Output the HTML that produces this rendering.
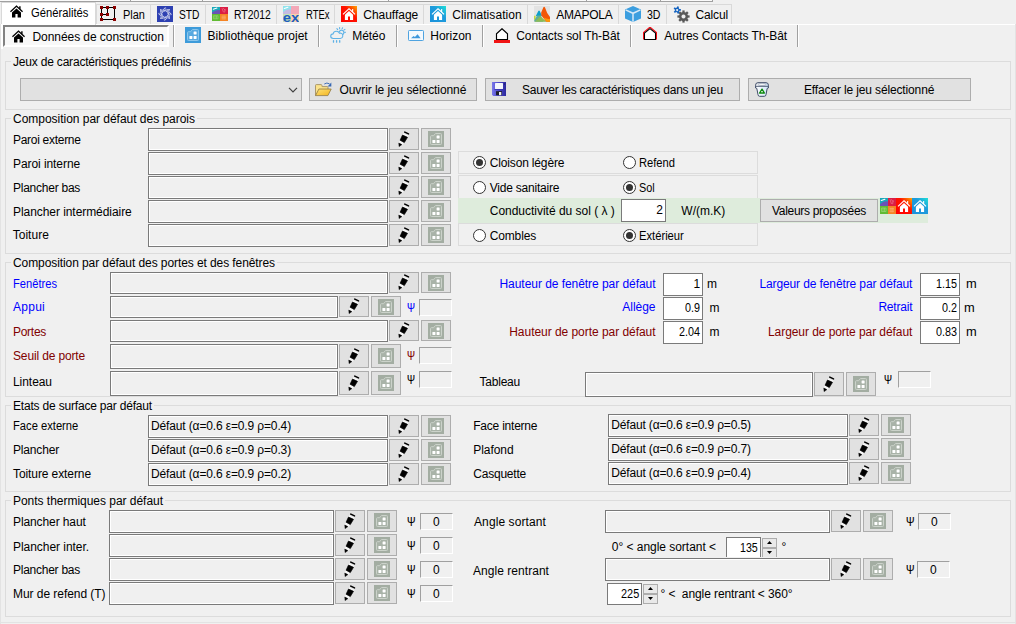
<!DOCTYPE html>
<html>
<head>
<meta charset="utf-8">
<title>Données de construction</title>
<style>
html,body{margin:0;padding:0;}
body{width:1016px;height:624px;overflow:hidden;background:#f0f0f0;font-family:"Liberation Sans",sans-serif;font-size:12px;color:#000;}
#root{position:relative;width:1016px;height:624px;overflow:hidden;background:#f0f0f0;}
#root div,#root span.t,#root svg{position:absolute;box-sizing:border-box;}
span.t{white-space:pre;line-height:16px;height:16px;}
.grp{border:1px solid #dcdcdc;}
.lbl{background:#f0f0f0;}
.inp{border:1px solid #7a7a7a;background:#f0f0f0;box-shadow:inset 0 0 0 1px #fff;}
.winp{border:1px solid #7a7a7a;background:#fff;}
.btn{border:1px solid #adadad;background:#e1e1e1;}
.psi{border:1px solid;border-color:#a0a0a0 #fff #fff #a0a0a0;background:#f0f0f0;}
.pan{border:1px solid #dcdcdc;}
.tab{border:1px solid #d9d9d9;border-bottom:none;background:#f0f0f0;}
.sep{width:2px;border-left:1px solid #a0a0a0;border-right:1px solid #fff;}
.rad{width:13px;height:13px;border-radius:50%;border:1px solid #333;background:#fff;}
.rad.on::after{content:"";position:absolute;left:2px;top:2px;width:7px;height:7px;border-radius:50%;background:#333;}
</style>
</head>
<body>
<svg width="0" height="0" style="position:absolute">
<defs>
<linearGradient id="gr" x1="0" y1="1" x2="1" y2="0"><stop offset="0" stop-color="#ff0000"/><stop offset="0.6" stop-color="#ff1400"/><stop offset="1" stop-color="#ffa800"/></linearGradient>
<linearGradient id="gb" x1="0" y1="1" x2="1" y2="0"><stop offset="0" stop-color="#1b92db"/><stop offset="0.6" stop-color="#1e9cdc"/><stop offset="1" stop-color="#1fe0d6"/></linearGradient>
<linearGradient id="gf" x1="0" y1="0" x2="1" y2="0"><stop offset="0" stop-color="#7a78ea"/><stop offset="0.5" stop-color="#4a46c8"/><stop offset="1" stop-color="#2d2a9c"/></linearGradient>
<linearGradient id="gy" x1="0" y1="0" x2="1" y2="1"><stop offset="0" stop-color="#fde27a"/><stop offset="1" stop-color="#f3b31c"/></linearGradient>
<linearGradient id="gt" x1="0" y1="0" x2="1" y2="0"><stop offset="0" stop-color="#ffffff"/><stop offset="1" stop-color="#cfe6f8"/></linearGradient>
<symbol id="pen" viewBox="0 0 12 17">
<path d="M5.5 2.3L10.5 4.7L9.6 6.4L4.6 4zM2 9L6.4 11.6L3.9 13.9L0.7 12.2z" fill="#fff" fill-opacity="0.8"/>
<path d="M6.8 1.1L10.5 2.9" stroke="#000" stroke-width="1.6" stroke-linecap="round"/>
<path d="M4.5 4.1L9.5 6.3L6.3 11.6L2.1 9.2z" fill="#000" stroke="#000" stroke-width="0.7" stroke-linejoin="round"/>
<path d="M0.8 12L3.9 13.6L1.1 15.6z" fill="#000" stroke="#000" stroke-width="0.5" stroke-linejoin="round"/>
</symbol>
<symbol id="lib" viewBox="0 0 16 16">
<rect width="16" height="16" fill="#a3ada2"/>
<path d="M2.5 12.7V5.6q0-0.9 0.9-0.9h2.3l1-1.6q0.4-0.6 1.1-0.6h4.8q0.9 0 0.9 0.9v9.3q0 0.8-0.9 0.8h-9.2q-0.9 0-0.9-0.8z" fill="#a9b3a8" stroke="#cbd2ca" stroke-width="1"/>
<rect x="8.6" y="4.5" width="3" height="3" rx="0.4" fill="#fff"/>
<rect x="4.4" y="8.9" width="3" height="3" rx="0.4" fill="#fff"/>
<rect x="8.6" y="8.9" width="3" height="3" rx="0.4" fill="#fff"/>
</symbol>
<symbol id="libb" viewBox="0 0 16 16">
<rect width="16" height="16" fill="#3d9bda"/>
<path d="M2.5 12.7V5.6q0-0.9 0.9-0.9h2.3l1-1.6q0.4-0.6 1.1-0.6h4.8q0.9 0 0.9 0.9v9.3q0 0.8-0.9 0.8h-9.2q-0.9 0-0.9-0.8z" fill="#57a9e0" stroke="#8cc6ec" stroke-width="1"/>
<rect x="8.6" y="4.5" width="3" height="3" rx="0.4" fill="#fff"/>
<rect x="4.4" y="8.9" width="3" height="3" rx="0.4" fill="#fff"/>
<rect x="8.6" y="8.9" width="3" height="3" rx="0.4" fill="#fff"/>
</symbol>
<symbol id="home" viewBox="0 0 13 13">
<path d="M6.5 0.2L0 6.2l0.9 1 5.6-5.1 5.6 5.1 0.9-1-2.4-2.2V1.2H9.2v1.5z"/>
<path d="M6.5 3.4L2 7.5v5.1h3.4V9h2.2v3.6H11V7.5z"/>
</symbol>
<symbol id="hs" viewBox="0 0 16 16">
<path d="M8 1.9L1.6 7.9l0.8 0.9L8 3.6l5.6 5.2 0.8-0.9-2.2-2.1V3h-1.1v1.7z" fill="#fff"/>
<path d="M8 5L3.9 8.8V14h3.1v-3.4h2V14h3.1V8.8z" fill="#fff"/>
</symbol>
<symbol id="plan" viewBox="0 0 16 15">
<path d="M1.5 1.5h13v12h-13zM7.5 1.5v7h-6" fill="none" stroke="#000" stroke-width="1"/>
<g fill="#8b0000"><rect x="0" y="0" width="3" height="3"/><rect x="6" y="0" width="3" height="3"/><rect x="13" y="0" width="3" height="3"/><rect x="0" y="7" width="3" height="3"/><rect x="6" y="7" width="3" height="3"/><rect x="0" y="12" width="3" height="3"/><rect x="13" y="12" width="3" height="3"/></g>
</symbol>
<symbol id="std" viewBox="0 0 16 16">
<rect width="16" height="16" fill="#2d40b2"/><g transform="rotate(0 8 8)"><path d="M7.6 5.2Q9.4 3.1 13 3.6M8.8 5.6Q10.4 4.3 12.7 4.9" fill="none" stroke="#fff" stroke-width="0.75" stroke-opacity="0.95"/></g><g transform="rotate(45 8 8)"><path d="M7.6 5.2Q9.4 3.1 13 3.6M8.8 5.6Q10.4 4.3 12.7 4.9" fill="none" stroke="#fff" stroke-width="0.75" stroke-opacity="0.95"/></g><g transform="rotate(90 8 8)"><path d="M7.6 5.2Q9.4 3.1 13 3.6M8.8 5.6Q10.4 4.3 12.7 4.9" fill="none" stroke="#fff" stroke-width="0.75" stroke-opacity="0.95"/></g><g transform="rotate(135 8 8)"><path d="M7.6 5.2Q9.4 3.1 13 3.6M8.8 5.6Q10.4 4.3 12.7 4.9" fill="none" stroke="#fff" stroke-width="0.75" stroke-opacity="0.95"/></g><g transform="rotate(180 8 8)"><path d="M7.6 5.2Q9.4 3.1 13 3.6M8.8 5.6Q10.4 4.3 12.7 4.9" fill="none" stroke="#fff" stroke-width="0.75" stroke-opacity="0.95"/></g><g transform="rotate(225 8 8)"><path d="M7.6 5.2Q9.4 3.1 13 3.6M8.8 5.6Q10.4 4.3 12.7 4.9" fill="none" stroke="#fff" stroke-width="0.75" stroke-opacity="0.95"/></g><g transform="rotate(270 8 8)"><path d="M7.6 5.2Q9.4 3.1 13 3.6M8.8 5.6Q10.4 4.3 12.7 4.9" fill="none" stroke="#fff" stroke-width="0.75" stroke-opacity="0.95"/></g><g transform="rotate(315 8 8)"><path d="M7.6 5.2Q9.4 3.1 13 3.6M8.8 5.6Q10.4 4.3 12.7 4.9" fill="none" stroke="#fff" stroke-width="0.75" stroke-opacity="0.95"/></g>
</symbol>
<symbol id="rt" viewBox="0 0 16 16" preserveAspectRatio="none">
<rect width="8" height="8" fill="#19a8b9"/>
<path d="M0 8V6.2Q4 2.4 8 3.6V8z" fill="#6b52b6"/>
<path d="M1.3 2.5L4.9 1.2" stroke="#fff" stroke-width="1.1" stroke-linecap="round"/>
<rect x="8" width="8" height="8" fill="#db1d44"/>
<rect y="8" width="8" height="8" fill="#61bb33"/>
<rect x="8" y="8" width="8" height="8" fill="#f58424"/>
<path d="M10 1.5l1.5 4.5M11 1.2l2.2 2.5M13.2 2.2l-0.6 4" stroke="#f08aa0" stroke-width="0.6" fill="none"/>
<path d="M1.5 10h4.5v3.5h-4.5zM3 10v3.5M4.5 10v3.5" stroke="#9fdc80" stroke-width="0.6" fill="none"/>
<path d="M9.5 10.5h4.5M9.5 12h4.5M9.5 13.5h4.5M11 9.5v5M12.8 9.5v5" stroke="#fab070" stroke-width="0.6" fill="none"/>
</symbol>
<symbol id="rtx" viewBox="0 0 16 16">
<rect width="8" height="8" fill="#8fe3ec"/>
<path d="M0 8V6.2Q4 2.4 8 3.6V8z" fill="#c3bbe2"/>
<path d="M1.3 2.5L4.9 1.2" stroke="#fff" stroke-width="1.1" stroke-linecap="round"/>
<rect x="8" width="8" height="8" fill="#f3a7b7"/>
<rect y="8" width="8" height="8" fill="#c4e2b4"/>
<rect x="8" y="8" width="8" height="8" fill="#fbd2ac"/>
<text x="-0.3" y="15.6" font-family="Liberation Sans, sans-serif" font-weight="bold" font-size="13.5" fill="#1d5cc0" textLength="16.4" lengthAdjust="spacingAndGlyphs">ex</text>
</symbol>
<symbol id="ama" viewBox="0 0 16 16">
<rect width="16" height="16" fill="#e3e3e3"/>
<path d="M0 9.7h1.6v4H0z" fill="#c6d936"/>
<path d="M1.8 10L4.2 5.2Q5 3.6 5.9 5.2L8 10z" fill="#0b9fcb"/>
<path d="M0.2 14.5L3 9.6H7L9 15.8H0.5z" fill="#5fae9c"/>
<path d="M0.8 15.8L6.3 10.3L12.6 15.8z" fill="#8dbb55"/>
<path d="M7.2 9.3V6.5L9.3 1.4Q10.2 0.2 11 1.6Q12.6 7.2 16 11V15.8H12.4Q9.5 12.5 7.2 9.3z" fill="#f25605"/>
<path d="M9.6 11.6Q12.5 13.4 16 13V15.8H12.6z" fill="#fb9a06"/>
</symbol>
<symbol id="cube" viewBox="0 0 16 16">
<path d="M8 0L16 3.5V12.5L8 16L0 12.5V3.5z" fill="#3c9edf"/>
<path d="M0.6 3.9L8 7.3L15.4 3.9M8 7.3V15.8" fill="none" stroke="#d6e8f6" stroke-width="1.5"/>
</symbol>
<symbol id="gear" viewBox="0 0 17 17">
<g transform="translate(10.5 10.5)" fill="#5a5a5a"><rect x="-1.15" y="-6.1" width="2.3" height="3" transform="rotate(0)"/><rect x="-1.15" y="-6.1" width="2.3" height="3" transform="rotate(45)"/><rect x="-1.15" y="-6.1" width="2.3" height="3" transform="rotate(90)"/><rect x="-1.15" y="-6.1" width="2.3" height="3" transform="rotate(135)"/><rect x="-1.15" y="-6.1" width="2.3" height="3" transform="rotate(180)"/><rect x="-1.15" y="-6.1" width="2.3" height="3" transform="rotate(225)"/><rect x="-1.15" y="-6.1" width="2.3" height="3" transform="rotate(270)"/><rect x="-1.15" y="-6.1" width="2.3" height="3" transform="rotate(315)"/><path fill-rule="evenodd" d="M0-4.5A4.5 4.5 0 1 0 0.001-4.5zM0-2A2 2 0 1 1-0.001-2z"/></g>
<g transform="translate(4.2 4) rotate(15)" fill="#1765c1"><rect x="-0.9" y="-3.7" width="1.8" height="2" transform="rotate(0)"/><rect x="-0.9" y="-3.7" width="1.8" height="2" transform="rotate(72)"/><rect x="-0.9" y="-3.7" width="1.8" height="2" transform="rotate(144)"/><rect x="-0.9" y="-3.7" width="1.8" height="2" transform="rotate(216)"/><rect x="-0.9" y="-3.7" width="1.8" height="2" transform="rotate(288)"/><path fill-rule="evenodd" d="M0-2.4A2.4 2.4 0 1 0 0.001-2.4zM0-1A1 1 0 1 1-0.001-1z"/></g>
</symbol>
<symbol id="meteo" viewBox="0 0 16 16">
<g fill="none" stroke="#5fb2e6" stroke-width="1.1" stroke-linecap="round">
<path d="M3.2 11.5Q0.6 11.3 0.7 9Q0.9 6.9 3.1 6.9Q3.6 4.2 6.3 4.2Q8.6 4.2 9.5 6.3Q10.3 5.9 11.2 6.3Q13.1 7 12.8 9.2Q12.5 11.4 10.3 11.5z"/>
<path d="M9.3 4.6Q10.3 2.9 12 3.2Q13.9 3.7 13.9 5.6Q13.8 6.8 13 7.4"/>
<path d="M9.6 0.6v1.2M12.6 0.7l-0.5 1.1M14.9 2.4l-1 0.7M15.6 5.3h-1.2M6.9 1.6l0.8 1"/>
<path d="M3.5 13.6v1.6M6.6 13.6v1.6M9.7 13.6v1.6" stroke-width="1.3"/>
</g>
</symbol>
<symbol id="horiz" viewBox="0 0 16 11">
<rect x="0.5" y="0.5" width="15" height="10" rx="0.8" fill="#f4f9fd" stroke="#4ea3e0" stroke-width="1"/>
<path d="M3 8.2L5.6 6.1L6.9 7L9.6 4.2L12.6 8.2z" fill="#3e98dc"/>
</symbol>
<symbol id="csol" viewBox="0 0 16 16">
<path d="M2.5 11.5V5.7L8 0.7L13.5 5.7V11.5z" fill="#fff" stroke="#000" stroke-width="1.15"/>
<rect x="0" y="12" width="16" height="3" fill="#f01414"/>
</symbol>
<symbol id="caut" viewBox="0 0 14 13">
<path d="M0.5 12.6V5.5L6.5 0.5H7.5L13.5 5.5V12.6" fill="none" stroke="#fa0a14" stroke-width="1.1"/>
<path d="M1.5 12.5V6L7 1.7L12.5 6V12.5z" fill="#fff" stroke="#000" stroke-width="1.05"/>
</symbol>
<symbol id="fold" viewBox="0 0 17 15">
<path d="M0.5 13.5V3.4Q0.5 2.6 1.3 2.6H6.1Q6.8 2.6 6.9 3.4L7.1 4.6H12.2Q13 4.6 13 5.4V7" fill="#fbe38b" stroke="#a38f63" stroke-width="0.9"/>
<path d="M0.5 13.6L3.9 7H16.2L12.9 13.6z" fill="url(#gy)" stroke="#8f7a45" stroke-width="0.8"/>
<path d="M9.3 2Q11.8 0.2 14.5 1.8" fill="none" stroke="#3667b4" stroke-width="0.95"/>
<path d="M16.3 0.6V4.4H12.6z" fill="#3667b4"/>
</symbol>
<symbol id="flop" viewBox="0 0 14 14">
<path d="M0 0H14V14H1.2L0 12.8z" fill="url(#gf)"/>
<rect x="3" y="1" width="8" height="6" rx="0.5" fill="#f4f6fb"/>
<rect x="2.4" y="7.2" width="9.2" height="0.8" fill="#3532ae"/>
<rect x="4" y="9.2" width="6" height="4" fill="#1e1e28"/>
<rect x="7" y="10" width="2.3" height="3.2" fill="#eceef6"/>
<rect x="12.1" y="1.4" width="1" height="1.3" fill="#1f1d70"/>
</symbol>
<symbol id="trash" viewBox="0 0 14 15">
<path d="M0.6 3.2Q0.6 0.7 3 0.7H11Q13.4 0.7 13.4 3.2V6L12.2 6.4L11 12.6Q10.8 14.3 9.4 14.3H4.6Q3.2 14.3 3 12.6L1.8 6.4L0.6 6z" fill="url(#gt)" stroke="#3d4b66" stroke-width="1"/>
<ellipse cx="7" cy="2.4" rx="4.2" ry="1" fill="#fff" stroke="#7b879c" stroke-width="0.5"/>
<path d="M1 4.3H13" stroke="#3d4b66" stroke-width="0.9"/>
<path d="M7 7.2L9.4 11H4.6z" fill="#fff" stroke="#0c8a0c" stroke-width="1.4" stroke-linejoin="round"/>
</symbol>
</defs>
</svg>
<div id="root">
<div style="left:0;top:0;width:713px;height:1px;background:#fafafa"></div>
<div style="left:0;top:1px;width:713px;height:1px;background:#a0a0a0"></div>
<div style="left:130px;top:0;width:1px;height:2px;background:#a0a0a0"></div>
<div style="left:202px;top:0;width:1px;height:2px;background:#a0a0a0"></div>
<div style="left:388px;top:0;width:1px;height:2px;background:#a0a0a0"></div>
<div style="left:586px;top:0;width:1px;height:2px;background:#a0a0a0"></div>
<div style="left:660px;top:0;width:1px;height:2px;background:#a0a0a0"></div>
<div style="left:712px;top:0;width:1px;height:2px;background:#a0a0a0"></div>
<div class="tab" style="left:96px;top:4px;width:55px;height:21px"></div>
<span class="t" style="left:122.5px;top:7px;transform:scaleX(0.915);transform-origin:0 0;">Plan</span>
<div class="tab" style="left:150px;top:4px;width:56px;height:21px"></div>
<span class="t" style="left:179px;top:7px;transform:scaleX(0.854);transform-origin:0 0;">STD</span>
<div class="tab" style="left:205px;top:4px;width:72px;height:21px"></div>
<span class="t" style="left:234.25px;top:7px;transform:scaleX(0.865);transform-origin:0 0;">RT2012</span>
<div class="tab" style="left:276px;top:4px;width:59px;height:21px"></div>
<span class="t" style="left:305.6px;top:7px;transform:scaleX(0.789);transform-origin:0 0;">RTEx</span>
<div class="tab" style="left:334px;top:4px;width:90px;height:21px"></div>
<span class="t" style="left:363.25px;top:7px;letter-spacing:-0.019px;">Chauffage</span>
<div class="tab" style="left:423px;top:4px;width:105px;height:21px"></div>
<span class="t" style="left:452.25px;top:7px;letter-spacing:0.061px;">Climatisation</span>
<div class="tab" style="left:527px;top:4px;width:92px;height:21px"></div>
<span class="t" style="left:556.25px;top:7px;letter-spacing:-0.254px;">AMAPOLA</span>
<div class="tab" style="left:618px;top:4px;width:49px;height:21px"></div>
<span class="t" style="left:647px;top:7px;transform:scaleX(0.880);transform-origin:0 0;">3D</span>
<div class="tab" style="left:666px;top:4px;width:66px;height:21px"></div>
<span class="t" style="left:695.5px;top:7px;letter-spacing:-0.143px;">Calcul</span>
<div style="left:0;top:24px;width:1016px;height:1px;background:#fff"></div>
<div style="left:1px;top:2px;width:95px;height:23px;background:#fff;border:1px solid #d9d9d9;border-bottom:none"></div>
<svg style="left:10px;top:5px" width="13" height="13"><use href="#home"/></svg>
<span class="t" style="left:30.6px;top:5px;transform:scaleX(0.935);transform-origin:0 0;">Généralités</span>
<div style="left:0;top:24px;width:1px;height:600px;background:#e3e3e3"></div>
<div style="left:1px;top:24px;width:2px;height:25px;background:#fff"></div>
<div style="left:3px;top:25px;width:166px;height:22px;border:2px solid;border-color:#828282 #fff #fff #828282;background:#f8f8f8"></div>
<svg style="left:12px;top:30px" width="13" height="13"><use href="#home"/></svg>
<span class="t" style="left:32.5px;top:29px;letter-spacing:-0.065px;">Données de construction</span>
<div class="sep" style="left:173px;top:25px;height:22px"></div>
<div class="sep" style="left:318px;top:25px;height:22px"></div>
<div class="sep" style="left:396px;top:25px;height:22px"></div>
<div class="sep" style="left:482px;top:25px;height:22px"></div>
<div class="sep" style="left:630px;top:25px;height:22px"></div>
<div class="sep" style="left:797px;top:25px;height:22px"></div>
<span class="t" style="left:207.5px;top:28px;letter-spacing:0.044px;">Bibliothèque projet</span>
<span class="t" style="left:352.25px;top:28px;letter-spacing:-0.072px;">Météo</span>
<span class="t" style="left:430.25px;top:28px;letter-spacing:-0.016px;">Horizon</span>
<span class="t" style="left:516.25px;top:28px;letter-spacing:-0.088px;">Contacts sol Th-Bât</span>
<span class="t" style="left:664.25px;top:28px;letter-spacing:-0.080px;">Autres Contacts Th-Bât</span>
<div class="grp" style="left:5px;top:61px;width:1006px;height:49px"></div>
<div class="lbl" style="left:11px;top:54px;width:182px;height:15px"></div>
<span class="t" style="left:13px;top:54px;letter-spacing:-0.193px;">Jeux de caractéristiques prédéfinis</span>
<div class="btn" style="left:20px;top:78px;width:282px;height:23px"></div>
<svg style="left:288px;top:86px" width="11" height="8"><path d="M1 1.9L5 5.9L9 1.9" fill="none" stroke="#404040" stroke-width="1.2"/></svg>
<div class="btn" style="left:309px;top:78px;width:168px;height:23px"></div>
<span class="t" style="left:339.5px;top:82px;letter-spacing:-0.077px;">Ouvrir le jeu sélectionné</span>
<div class="btn" style="left:485px;top:78px;width:255px;height:23px"></div>
<span class="t" style="left:521.9px;top:82px;letter-spacing:-0.217px;">Sauver les caractéristiques dans un jeu</span>
<div class="btn" style="left:748px;top:78px;width:223px;height:23px"></div>
<span class="t" style="left:804px;top:82px;letter-spacing:-0.141px;">Effacer le jeu sélectionné</span>
<div class="grp" style="left:5px;top:118px;width:1006px;height:136px"></div>
<div class="lbl" style="left:11px;top:111px;width:186px;height:15px"></div>
<span class="t" style="left:13px;top:111px;letter-spacing:-0.024px;">Composition par défaut des parois</span>
<span class="t" style="left:13px;top:132px;letter-spacing:-0.290px;">Paroi externe</span>
<div class="inp" style="left:148px;top:128px;width:240px;height:23px"></div>
<div class="btn" style="left:389px;top:128px;width:30px;height:22px"></div><svg style="left:398px;top:130.5px" width="12" height="17"><use href="#pen"/></svg>
<div class="btn" style="left:421px;top:128px;width:30px;height:22px"></div><svg style="left:428px;top:131.0px;" width="16" height="16"><use href="#lib"/></svg>
<span class="t" style="left:13px;top:156px;letter-spacing:-0.073px;">Paroi interne</span>
<div class="inp" style="left:148px;top:152px;width:240px;height:23px"></div>
<div class="btn" style="left:389px;top:152px;width:30px;height:22px"></div><svg style="left:398px;top:154.5px" width="12" height="17"><use href="#pen"/></svg>
<div class="btn" style="left:421px;top:152px;width:30px;height:22px"></div><svg style="left:428px;top:155.0px;" width="16" height="16"><use href="#lib"/></svg>
<span class="t" style="left:13px;top:180px;letter-spacing:-0.246px;">Plancher bas</span>
<div class="inp" style="left:148px;top:176px;width:240px;height:23px"></div>
<div class="btn" style="left:389px;top:176px;width:30px;height:22px"></div><svg style="left:398px;top:178.5px" width="12" height="17"><use href="#pen"/></svg>
<div class="btn" style="left:421px;top:176px;width:30px;height:22px"></div><svg style="left:428px;top:179.0px;" width="16" height="16"><use href="#lib"/></svg>
<span class="t" style="left:13px;top:204px;letter-spacing:-0.062px;">Plancher intermédiaire</span>
<div class="inp" style="left:148px;top:200px;width:240px;height:23px"></div>
<div class="btn" style="left:389px;top:200px;width:30px;height:22px"></div><svg style="left:398px;top:202.5px" width="12" height="17"><use href="#pen"/></svg>
<div class="btn" style="left:421px;top:200px;width:30px;height:22px"></div><svg style="left:428px;top:203.0px;" width="16" height="16"><use href="#lib"/></svg>
<span class="t" style="left:12.7px;top:227px;letter-spacing:0.024px;">Toiture</span>
<div class="inp" style="left:148px;top:224px;width:240px;height:23px"></div>
<div class="btn" style="left:389px;top:224px;width:30px;height:22px"></div><svg style="left:398px;top:226.5px" width="12" height="17"><use href="#pen"/></svg>
<div class="btn" style="left:421px;top:224px;width:30px;height:22px"></div><svg style="left:428px;top:227.0px;" width="16" height="16"><use href="#lib"/></svg>
<div class="pan" style="left:458px;top:151px;width:300px;height:23px"></div>
<div class="pan" style="left:458px;top:175px;width:300px;height:24px"></div>
<div class="pan" style="left:458px;top:223px;width:300px;height:23px"></div>
<div style="left:458px;top:198px;width:470px;height:25px;background:#deecdc"></div>
<div class="rad on" style="left:473px;top:156px"></div>
<span class="t" style="left:489.75px;top:155px;letter-spacing:-0.158px;">Cloison légère</span>
<div class="rad" style="left:623px;top:156px"></div>
<span class="t" style="left:639px;top:155px;transform:scaleX(0.930);transform-origin:0 0;">Refend</span>
<div class="rad" style="left:473px;top:181px"></div>
<span class="t" style="left:489.75px;top:180px;letter-spacing:-0.214px;">Vide sanitaire</span>
<div class="rad on" style="left:623px;top:181px"></div>
<span class="t" style="left:639px;top:180px;transform:scaleX(0.905);transform-origin:0 0;">Sol</span>
<div class="rad" style="left:473px;top:229px"></div>
<span class="t" style="left:489.75px;top:228px;letter-spacing:-0.158px;">Combles</span>
<div class="rad on" style="left:623px;top:229px"></div>
<span class="t" style="left:639px;top:228px;transform:scaleX(0.933);transform-origin:0 0;">Extérieur</span>
<span class="t" style="left:489.75px;top:203px;letter-spacing:-0.016px;">Conductivité du sol ( λ )</span>
<div class="winp" style="left:621px;top:199px;width:45px;height:23px"></div>
<span class="t" style="right:353px;top:202px;">2</span>
<span class="t" style="left:681.3px;top:203px;letter-spacing:0.014px;">W/(m.K)</span>
<div class="btn" style="left:760px;top:199px;width:118px;height:23px"></div>
<span class="t" style="left:772px;top:203px;letter-spacing:-0.304px;">Valeurs proposées</span>
<div class="grp" style="left:5px;top:262px;width:1006px;height:135px"></div>
<div class="lbl" style="left:11px;top:255px;width:266px;height:15px"></div>
<span class="t" style="left:13px;top:255px;letter-spacing:-0.085px;">Composition par défaut des portes et des fenêtres</span>
<span class="t" style="left:13px;top:276px;transform:scaleX(0.929);transform-origin:0 0;color:#0000ff;">Fenêtres</span>
<div class="inp" style="left:110px;top:272px;width:278px;height:22px"></div>
<div class="btn" style="left:389px;top:272px;width:30px;height:21px"></div><svg style="left:398px;top:274.0px" width="12" height="17"><use href="#pen"/></svg>
<div class="btn" style="left:421px;top:272px;width:30px;height:21px"></div><svg style="left:428px;top:274.5px;" width="16" height="16"><use href="#lib"/></svg>
<span class="t" style="left:13px;top:299px;letter-spacing:0.259px;color:#0000ff;">Appui</span>
<div class="inp" style="left:110px;top:296px;width:228px;height:22px"></div>
<div class="btn" style="left:339px;top:296px;width:30px;height:21px"></div><svg style="left:348px;top:298.0px" width="12" height="17"><use href="#pen"/></svg>
<div class="btn" style="left:371px;top:296px;width:30px;height:21px"></div><svg style="left:378px;top:298.5px;" width="16" height="16"><use href="#lib"/></svg>
<span class="t" style="left:406.5px;top:300px;transform:scaleX(0.8);transform-origin:0 0;-webkit-text-stroke:0.12px;color:#0000ff;">Ψ</span>
<div class="psi" style="left:419px;top:299px;width:33px;height:17px"></div>
<span class="t" style="left:13px;top:324px;letter-spacing:-0.281px;color:#800000;">Portes</span>
<div class="inp" style="left:110px;top:320px;width:278px;height:22px"></div>
<div class="btn" style="left:389px;top:320px;width:30px;height:21px"></div><svg style="left:398px;top:322.0px" width="12" height="17"><use href="#pen"/></svg>
<div class="btn" style="left:421px;top:320px;width:30px;height:21px"></div><svg style="left:428px;top:322.5px;" width="16" height="16"><use href="#lib"/></svg>
<span class="t" style="left:13px;top:348px;letter-spacing:-0.147px;color:#800000;">Seuil de porte</span>
<div class="inp" style="left:110px;top:344px;width:228px;height:25px"></div>
<div class="btn" style="left:339px;top:344px;width:30px;height:24px"></div><svg style="left:348px;top:347.5px" width="12" height="17"><use href="#pen"/></svg>
<div class="btn" style="left:371px;top:344px;width:30px;height:24px"></div><svg style="left:378px;top:348.0px;" width="16" height="16"><use href="#lib"/></svg>
<span class="t" style="left:406.5px;top:348px;transform:scaleX(0.8);transform-origin:0 0;-webkit-text-stroke:0.12px;color:#800000;">Ψ</span>
<div class="psi" style="left:419px;top:347px;width:33px;height:17px"></div>
<span class="t" style="left:13px;top:374px;letter-spacing:-0.054px;">Linteau</span>
<div class="inp" style="left:110px;top:371px;width:228px;height:25px"></div>
<div class="btn" style="left:339px;top:371px;width:30px;height:24px"></div><svg style="left:348px;top:374.5px" width="12" height="17"><use href="#pen"/></svg>
<div class="btn" style="left:371px;top:371px;width:30px;height:24px"></div><svg style="left:378px;top:375.0px;" width="16" height="16"><use href="#lib"/></svg>
<span class="t" style="left:406.5px;top:372px;transform:scaleX(0.8);transform-origin:0 0;-webkit-text-stroke:0.12px;">Ψ</span>
<div class="psi" style="left:419px;top:371px;width:33px;height:17px"></div>
<span class="t" style="left:499.5px;top:276px;letter-spacing:-0.050px;color:#0000ff;">Hauteur de fenêtre par défaut</span>
<div class="winp" style="left:663px;top:273px;width:40px;height:23px"></div>
<span class="t" style="left:693.5px;top:276px;letter-spacing:-0.388px;">1</span>
<span class="t" style="left:707px;top:276px;letter-spacing:0.000px;">m</span>
<span class="t" style="left:622.25px;top:299px;letter-spacing:-0.018px;color:#0000ff;">Allège</span>
<div class="winp" style="left:663px;top:297px;width:40px;height:23px"></div>
<span class="t" style="left:684.8px;top:300px;transform:scaleX(0.899);transform-origin:0 0;">0.9</span>
<span class="t" style="left:709.5px;top:300px;letter-spacing:0.000px;">m</span>
<span class="t" style="left:509.25px;top:324px;letter-spacing:-0.044px;color:#800000;">Hauteur de porte par défaut</span>
<div class="winp" style="left:663px;top:321px;width:40px;height:23px"></div>
<span class="t" style="left:678.8px;top:324px;transform:scaleX(0.899);transform-origin:0 0;">2.04</span>
<span class="t" style="left:709.5px;top:324px;letter-spacing:0.000px;">m</span>
<span class="t" style="left:759.4px;top:276px;letter-spacing:-0.111px;color:#0000ff;">Largeur de fenêtre par défaut</span>
<div class="winp" style="left:920px;top:273px;width:40px;height:23px"></div>
<span class="t" style="left:936px;top:276px;transform:scaleX(0.899);transform-origin:0 0;">1.15</span>
<span class="t" style="left:966.3px;top:276px;transform:scaleX(1.070);transform-origin:0 0;">m</span>
<span class="t" style="left:878.4px;top:299px;letter-spacing:-0.206px;color:#0000ff;">Retrait</span>
<div class="winp" style="left:920px;top:297px;width:40px;height:23px"></div>
<span class="t" style="left:942px;top:300px;transform:scaleX(0.899);transform-origin:0 0;">0.2</span>
<span class="t" style="left:964.3px;top:300px;transform:scaleX(1.070);transform-origin:0 0;">m</span>
<span class="t" style="left:768px;top:324px;letter-spacing:-0.067px;color:#800000;">Largeur de porte par défaut</span>
<div class="winp" style="left:920px;top:321px;width:40px;height:23px"></div>
<span class="t" style="left:936px;top:324px;transform:scaleX(0.899);transform-origin:0 0;">0.83</span>
<span class="t" style="left:966.3px;top:324px;transform:scaleX(1.070);transform-origin:0 0;">m</span>
<span class="t" style="left:479.5px;top:374px;letter-spacing:-0.221px;">Tableau</span>
<div class="inp" style="left:585px;top:372px;width:228px;height:25px"></div>
<div class="btn" style="left:814px;top:372px;width:30px;height:24px"></div><svg style="left:823px;top:375.5px" width="12" height="17"><use href="#pen"/></svg>
<div class="btn" style="left:846px;top:372px;width:30px;height:24px"></div><svg style="left:853px;top:376.0px;" width="16" height="16"><use href="#lib"/></svg>
<span class="t" style="left:884.4px;top:372px;transform:scaleX(0.8);transform-origin:0 0;-webkit-text-stroke:0.12px;">Ψ</span>
<div class="psi" style="left:898px;top:371px;width:33px;height:17px"></div>
<div class="grp" style="left:5px;top:405px;width:1006px;height:87px"></div>
<div class="lbl" style="left:11px;top:398px;width:143px;height:15px"></div>
<span class="t" style="left:13px;top:398px;letter-spacing:-0.189px;">Etats de surface par défaut</span>
<span class="t" style="left:13px;top:418px;transform:scaleX(0.932);transform-origin:0 0;">Face externe</span>
<div class="inp" style="left:148px;top:415px;width:240px;height:23px"></div>
<div class="btn" style="left:389px;top:415px;width:30px;height:22px"></div><svg style="left:398px;top:417.5px" width="12" height="17"><use href="#pen"/></svg>
<div class="btn" style="left:421px;top:415px;width:30px;height:22px"></div><svg style="left:428px;top:418.0px;" width="16" height="16"><use href="#lib"/></svg>
<span class="t" style="left:151px;top:418px;letter-spacing:-0.136px;">Défaut (α=0.6 ε=0.9 ρ=0.4)</span>
<span class="t" style="left:473.25px;top:418px;letter-spacing:-0.225px;">Face interne</span>
<div class="inp" style="left:608px;top:414px;width:240px;height:23px"></div>
<div class="btn" style="left:849px;top:414px;width:30px;height:22px"></div><svg style="left:858px;top:416.5px" width="12" height="17"><use href="#pen"/></svg>
<div class="btn" style="left:881px;top:414px;width:30px;height:22px"></div><svg style="left:888px;top:417.0px;" width="16" height="16"><use href="#lib"/></svg>
<span class="t" style="left:611.25px;top:417px;letter-spacing:-0.155px;">Défaut (α=0.6 ε=0.9 ρ=0.5)</span>
<span class="t" style="left:13px;top:442px;letter-spacing:-0.172px;">Plancher</span>
<div class="inp" style="left:148px;top:439px;width:240px;height:23px"></div>
<div class="btn" style="left:389px;top:439px;width:30px;height:22px"></div><svg style="left:398px;top:441.5px" width="12" height="17"><use href="#pen"/></svg>
<div class="btn" style="left:421px;top:439px;width:30px;height:22px"></div><svg style="left:428px;top:442.0px;" width="16" height="16"><use href="#lib"/></svg>
<span class="t" style="left:151px;top:442px;letter-spacing:-0.136px;">Défaut (α=0.6 ε=0.9 ρ=0.3)</span>
<span class="t" style="left:473.25px;top:442px;letter-spacing:-0.065px;">Plafond</span>
<div class="inp" style="left:608px;top:438px;width:240px;height:23px"></div>
<div class="btn" style="left:849px;top:438px;width:30px;height:22px"></div><svg style="left:858px;top:440.5px" width="12" height="17"><use href="#pen"/></svg>
<div class="btn" style="left:881px;top:438px;width:30px;height:22px"></div><svg style="left:888px;top:441.0px;" width="16" height="16"><use href="#lib"/></svg>
<span class="t" style="left:611.25px;top:441px;letter-spacing:-0.155px;">Défaut (α=0.6 ε=0.9 ρ=0.7)</span>
<span class="t" style="left:13px;top:466px;letter-spacing:-0.093px;">Toiture externe</span>
<div class="inp" style="left:148px;top:463px;width:240px;height:23px"></div>
<div class="btn" style="left:389px;top:463px;width:30px;height:22px"></div><svg style="left:398px;top:465.5px" width="12" height="17"><use href="#pen"/></svg>
<div class="btn" style="left:421px;top:463px;width:30px;height:22px"></div><svg style="left:428px;top:466.0px;" width="16" height="16"><use href="#lib"/></svg>
<span class="t" style="left:151px;top:466px;letter-spacing:-0.136px;">Défaut (α=0.6 ε=0.9 ρ=0.2)</span>
<span class="t" style="left:473.25px;top:466px;letter-spacing:-0.217px;">Casquette</span>
<div class="inp" style="left:608px;top:462px;width:240px;height:23px"></div>
<div class="btn" style="left:849px;top:462px;width:30px;height:22px"></div><svg style="left:858px;top:464.5px" width="12" height="17"><use href="#pen"/></svg>
<div class="btn" style="left:881px;top:462px;width:30px;height:22px"></div><svg style="left:888px;top:465.0px;" width="16" height="16"><use href="#lib"/></svg>
<span class="t" style="left:611.25px;top:465px;letter-spacing:-0.155px;">Défaut (α=0.6 ε=0.9 ρ=0.4)</span>
<div class="grp" style="left:5px;top:500px;width:1006px;height:117px"></div>
<div class="lbl" style="left:11px;top:493px;width:154px;height:15px"></div>
<span class="t" style="left:13px;top:493px;letter-spacing:-0.028px;">Ponts thermiques par défaut</span>
<span class="t" style="left:13px;top:514px;letter-spacing:-0.101px;">Plancher haut</span>
<div class="inp" style="left:109px;top:510px;width:225px;height:23px"></div>
<div class="btn" style="left:335px;top:510px;width:30px;height:22px"></div><svg style="left:344px;top:512.5px" width="12" height="17"><use href="#pen"/></svg>
<div class="btn" style="left:367px;top:510px;width:30px;height:22px"></div><svg style="left:374px;top:513.0px;" width="16" height="16"><use href="#lib"/></svg>
<span class="t" style="left:407px;top:514px;transform:scaleX(0.85);transform-origin:0 0;-webkit-text-stroke:0.12px;">Ψ</span>
<div class="psi" style="left:420px;top:513px;width:33px;height:17px"></div>
<span class="t" style="left:433px;top:514px;letter-spacing:-0.188px;">0</span>
<span class="t" style="left:13px;top:539px;letter-spacing:-0.048px;">Plancher inter.</span>
<div class="inp" style="left:109px;top:534px;width:225px;height:23px"></div>
<div class="btn" style="left:335px;top:534px;width:30px;height:22px"></div><svg style="left:344px;top:536.5px" width="12" height="17"><use href="#pen"/></svg>
<div class="btn" style="left:367px;top:534px;width:30px;height:22px"></div><svg style="left:374px;top:537.0px;" width="16" height="16"><use href="#lib"/></svg>
<span class="t" style="left:407px;top:538px;transform:scaleX(0.85);transform-origin:0 0;-webkit-text-stroke:0.12px;">Ψ</span>
<div class="psi" style="left:420px;top:537px;width:33px;height:17px"></div>
<span class="t" style="left:433px;top:538px;letter-spacing:-0.188px;">0</span>
<span class="t" style="left:13px;top:562px;letter-spacing:-0.254px;">Plancher bas</span>
<div class="inp" style="left:109px;top:558px;width:225px;height:23px"></div>
<div class="btn" style="left:335px;top:558px;width:30px;height:22px"></div><svg style="left:344px;top:560.5px" width="12" height="17"><use href="#pen"/></svg>
<div class="btn" style="left:367px;top:558px;width:30px;height:22px"></div><svg style="left:374px;top:561.0px;" width="16" height="16"><use href="#lib"/></svg>
<span class="t" style="left:407px;top:562px;transform:scaleX(0.85);transform-origin:0 0;-webkit-text-stroke:0.12px;">Ψ</span>
<div class="psi" style="left:420px;top:561px;width:33px;height:17px"></div>
<span class="t" style="left:433px;top:562px;letter-spacing:-0.188px;">0</span>
<span class="t" style="left:13px;top:586px;letter-spacing:-0.051px;">Mur de refend (T)</span>
<div class="inp" style="left:109px;top:582px;width:225px;height:23px"></div>
<div class="btn" style="left:335px;top:582px;width:30px;height:22px"></div><svg style="left:344px;top:584.5px" width="12" height="17"><use href="#pen"/></svg>
<div class="btn" style="left:367px;top:582px;width:30px;height:22px"></div><svg style="left:374px;top:585.0px;" width="16" height="16"><use href="#lib"/></svg>
<span class="t" style="left:407px;top:586px;transform:scaleX(0.85);transform-origin:0 0;-webkit-text-stroke:0.12px;">Ψ</span>
<div class="psi" style="left:420px;top:585px;width:33px;height:17px"></div>
<span class="t" style="left:433px;top:586px;letter-spacing:-0.188px;">0</span>
<span class="t" style="left:474px;top:514px;letter-spacing:0.099px;">Angle sortant</span>
<div class="inp" style="left:605px;top:510px;width:225px;height:23px"></div>
<div class="btn" style="left:831px;top:510px;width:30px;height:22px"></div><svg style="left:840px;top:512.5px" width="12" height="17"><use href="#pen"/></svg>
<div class="btn" style="left:863px;top:510px;width:30px;height:22px"></div><svg style="left:870px;top:513.0px;" width="16" height="16"><use href="#lib"/></svg>
<span class="t" style="left:905.75px;top:514px;transform:scaleX(0.85);transform-origin:0 0;-webkit-text-stroke:0.12px;">Ψ</span>
<div class="psi" style="left:918px;top:513px;width:33px;height:17px"></div>
<span class="t" style="left:931px;top:514px;letter-spacing:-0.188px;">0</span>
<span class="t" style="left:611.75px;top:539px;letter-spacing:-0.031px;">0° &lt; angle sortant &lt;</span>
<div class="winp" style="left:726px;top:537px;width:35px;height:20px;border-bottom:none"></div>
<span class="t" style="left:740.4px;top:540px;transform:scaleX(0.889);transform-origin:0 0;">135</span>
<div class="btn" style="left:762px;top:538px;width:15px;height:10px;background:#e9e9e9"></div><div class="btn" style="left:762px;top:548px;width:15px;height:9px;border-bottom:none;background:#e9e9e9"></div>
<svg style="left:767px;top:541px" width="5" height="3"><path d="M0 3L2.5 0L5 3z"/></svg><svg style="left:767px;top:551px" width="5" height="3"><path d="M0 0L2.5 3L5 0z"/></svg>
<span class="t" style="left:781.5px;top:539px;">°</span>
<span class="t" style="left:473px;top:563px;letter-spacing:0.044px;">Angle rentrant</span>
<div class="inp" style="left:605px;top:558px;width:225px;height:23px"></div>
<div class="btn" style="left:831px;top:558px;width:30px;height:22px"></div><svg style="left:840px;top:560.5px" width="12" height="17"><use href="#pen"/></svg>
<div class="btn" style="left:863px;top:558px;width:30px;height:22px"></div><svg style="left:870px;top:561.0px;" width="16" height="16"><use href="#lib"/></svg>
<span class="t" style="left:905.75px;top:562px;transform:scaleX(0.85);transform-origin:0 0;-webkit-text-stroke:0.12px;">Ψ</span>
<div class="psi" style="left:917px;top:561px;width:33px;height:17px"></div>
<span class="t" style="left:930px;top:562px;letter-spacing:-0.188px;">0</span>
<div class="winp" style="left:607px;top:583px;width:35px;height:22px"></div>
<span class="t" style="left:620.8px;top:586px;transform:scaleX(0.909);transform-origin:0 0;">225</span>
<div class="btn" style="left:643px;top:584px;width:15px;height:10px;background:#e9e9e9"></div><div class="btn" style="left:643px;top:594px;width:15px;height:10px;background:#e9e9e9"></div>
<svg style="left:648px;top:587px" width="5" height="3"><path d="M0 3L2.5 0L5 3z"/></svg><svg style="left:648px;top:597px" width="5" height="3"><path d="M0 0L2.5 3L5 0z"/></svg>
<span class="t" style="left:660.5px;top:586px;letter-spacing:-0.091px;">° &lt;  angle rentrant &lt; 360°</span>
<svg style="left:100px;top:6px;" width="16" height="15"><use href="#plan"/></svg>
<svg style="left:157px;top:6px;" width="16" height="16"><use href="#std"/></svg>
<svg style="left:212px;top:7px;" width="16" height="14"><use href="#rt"/></svg>
<svg style="left:283px;top:6px;" width="16" height="16"><use href="#rtx"/></svg>
<svg style="left:341px;top:6px" width="16" height="16"><rect width="16" height="16" fill="url(#gr)"/><use href="#hs"/></svg>
<svg style="left:430px;top:6px" width="16" height="16"><rect width="16" height="16" fill="url(#gb)"/><use href="#hs"/></svg>
<svg style="left:534px;top:6px;" width="16" height="16"><use href="#ama"/></svg>
<svg style="left:625px;top:6px;" width="16" height="16"><use href="#cube"/></svg>
<svg style="left:672.5px;top:5.5px;" width="17" height="17"><use href="#gear"/></svg>
<svg style="left:185px;top:27px;" width="16" height="16"><use href="#libb"/></svg>
<svg style="left:330px;top:27px;" width="16" height="16"><use href="#meteo"/></svg>
<svg style="left:408px;top:29.5px;" width="16" height="11"><use href="#horiz"/></svg>
<svg style="left:494px;top:28px;" width="16" height="16"><use href="#csol"/></svg>
<svg style="left:643px;top:27px;" width="14" height="13"><use href="#caut"/></svg>
<svg style="left:315px;top:81.5px;" width="17" height="15"><use href="#fold"/></svg>
<svg style="left:492px;top:82px;" width="14" height="14"><use href="#flop"/></svg>
<svg style="left:754.5px;top:81.5px;" width="14" height="15"><use href="#trash"/></svg>
<svg style="left:880px;top:198px;" width="16" height="16"><use href="#rt"/></svg>
<svg style="left:896px;top:198px" width="16" height="16"><rect width="16" height="16" fill="url(#gr)"/><use href="#hs"/></svg>
<svg style="left:912px;top:198px" width="16" height="16"><rect width="16" height="16" fill="url(#gb)"/><use href="#hs"/></svg>
<div style="left:0;top:622px;width:1016px;height:1px;background:#e3e3e3"></div>
<div style="left:1015px;top:24px;width:1px;height:600px;background:#e3e3e3"></div>
</div>
</body>
</html>
